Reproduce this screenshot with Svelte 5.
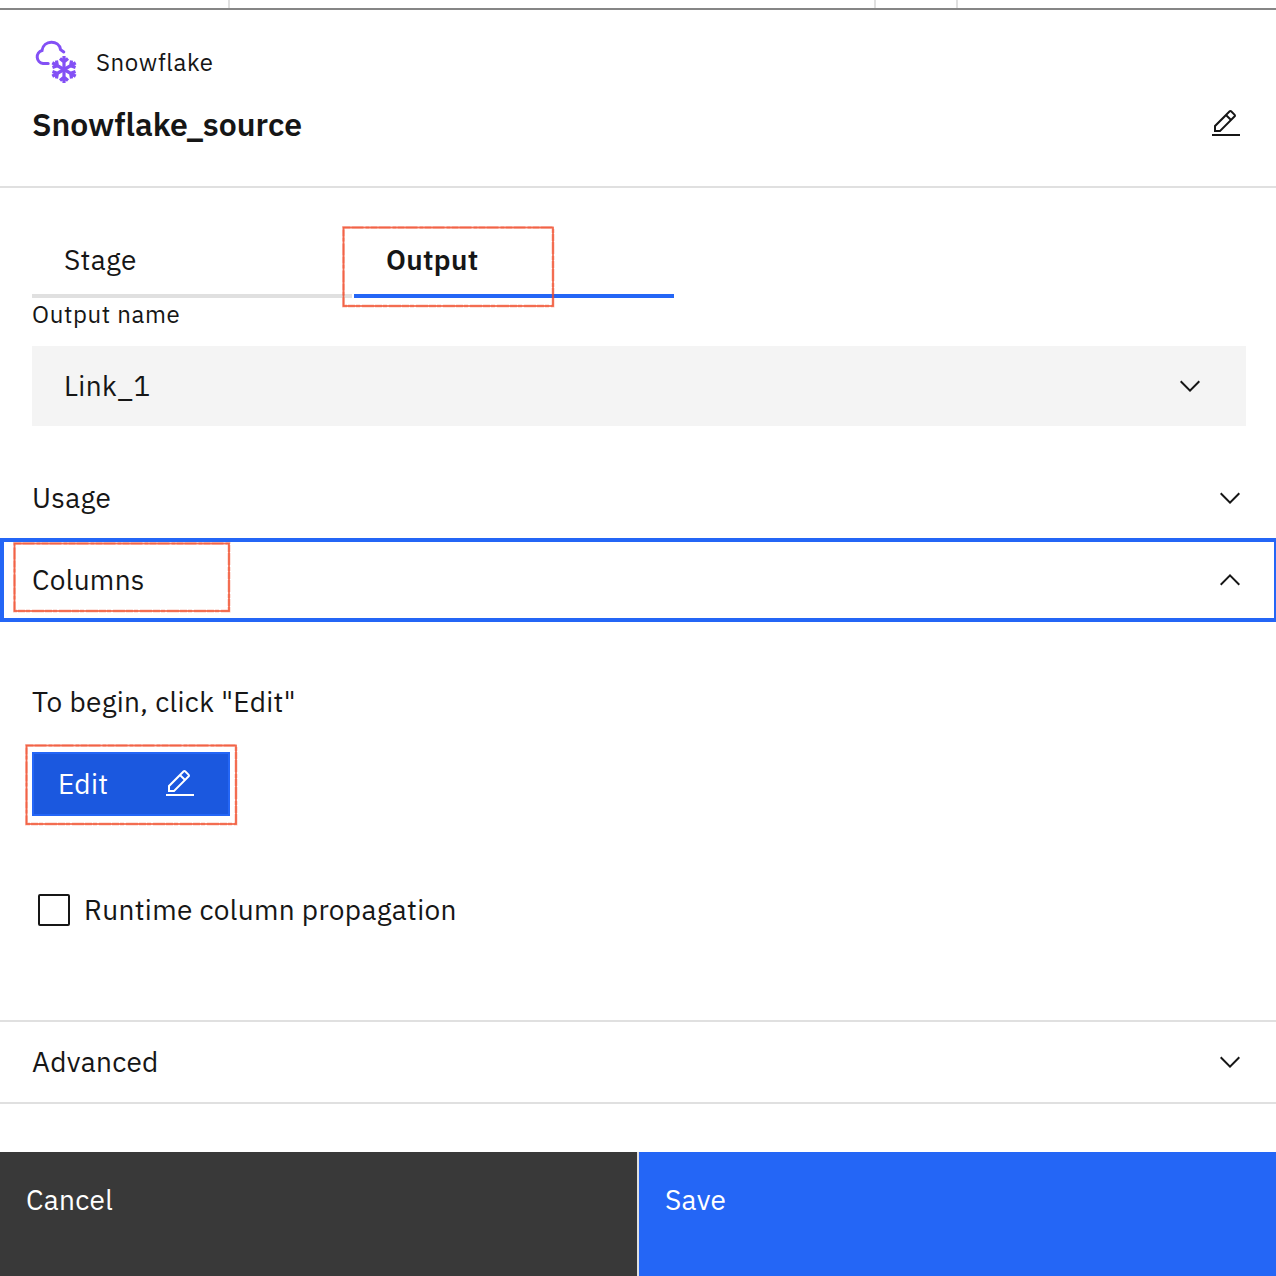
<script>
  const sections = {
    usage: 'Usage',
    columns: 'Columns',
    advanced: 'Advanced'
  };
  let propagate = $state(false);
  const arms = [0, 60, 120, 180, 240, 300];
</script>

{#snippet pencil()}
  <svg class="pencil" viewBox="0 0 32 32" aria-hidden="true">
    <path d="M2 26h28v2H2zM25.4 9c.8-.8.8-2 0-2.8l-3.6-3.6c-.8-.8-2-.8-2.8 0l-15 15V24h6.4zm-5-5L24 7.6l-3 3L17.4 7zM6 22v-3.6l10-10 3.6 3.6-10 10z" fill-rule="evenodd" />
  </svg>
{/snippet}

{#snippet chevron(up)}
  <svg class="chevron" class:up viewBox="0 0 16 16" aria-hidden="true">
    <path d="M8 11 3 6l.7-.7L8 9.6l4.3-4.3.7.7z" />
  </svg>
{/snippet}

{#snippet marker(w, h)}
  <svg class="marker" viewBox="0 0 {w} {h}" width={w} height={h} aria-hidden="true">
    <rect class="halo" x="1.5" y="1.5" width={w - 3.5} height={h - 3.5} />
    <rect class="core" x="1.5" y="1.5" width={w - 3.5} height={h - 3.5} />
  </svg>
{/snippet}

<div class="page">
  <div class="canvas-strip"><i></i><i></i><i></i><i></i></div>

  <header>
    <div class="connector">
      <svg class="logo" viewBox="0 0 48 48" aria-hidden="true">
        <path class="cloud" d="M16.2 25.4H11A6.600 6.600 0 0 1 10 12.500C11.500 1.800 27 1.600 28.600 11.700L31.800 13.900" />
        <g transform="translate(32 31.5)">
          {#each arms as angle}
            <path class="arm" transform="rotate({angle})" d="M0 0V-13.500M-4 -11 0 -7.600 4 -11" />
          {/each}
        </g>
      </svg>
      <span>Snowflake</span>
    </div>
    <div class="title-row">
      <h1>Snowflake_source</h1>
      {@render pencil()}
    </div>
  </header>

  <nav>
    <button class="tab"><span>Stage</span></button>
    <button class="tab active">
      <span>Output</span>
      <span class="mark mark-output">{@render marker(213, 82)}</span>
    </button>
  </nav>

  <div class="label"><span>Output name</span></div>
  <button class="select"><span>Link_1</span>{@render chevron(false)}</button>

  <button class="section usage"><span>{sections.usage}</span>{@render chevron(false)}</button>
  <button class="section columns">
    <span>{sections.columns}</span>{@render chevron(true)}
    <span class="mark mark-columns">{@render marker(218, 71)}</span>
  </button>

  <div class="panel">
    <p>To begin, click "Edit"</p>
    <button class="edit">
      <span>Edit</span>{@render pencil()}
      <span class="mark mark-edit">{@render marker(213, 82)}</span>
    </button>
    <label>
      <input type="checkbox" bind:checked={propagate} />
      <span>Runtime column propagation</span>
    </label>
  </div>

  <button class="section advanced"><span>{sections.advanced}</span>{@render chevron(false)}</button>

  <footer>
    <button class="cancel"><span>Cancel</span></button>
    <button class="save"><span>Save</span></button>
  </footer>
</div>

<style>
  :global(body) { margin: 0; background: #fff; }
  .page {
    box-sizing: border-box;
    width: 1276px;
    height: 1276px;
    display: flex;
    flex-direction: column;
    overflow: hidden;
    color: #161616;
    font: 400 28px/36px "IBM Plex Sans", "Open Sans", sans-serif;
    letter-spacing: 0.32px;
  }
  .page * { box-sizing: border-box; }
  button {
    display: flex;
    align-items: center;
    margin: 0;
    padding: 0;
    border: 0;
    border-radius: 0;
    background: none;
    color: inherit;
    font: inherit;
    letter-spacing: inherit;
    text-align: left;
    position: relative;
  }
  span { white-space: nowrap; }
  svg { display: block; flex: none; fill: currentColor; }
  .pencil, .chevron { width: 32px; height: 32px; }
  .up { transform: rotate(180deg); }

  .canvas-strip {
    display: grid;
    grid-template-columns: 230px 646px 82px 1fr;
    height: 10px;
    border-bottom: 2px solid #868686;
  }
  .canvas-strip i { border-right: 2px solid #e0e0e0; }
  .canvas-strip i:last-child { border: 0; }

  header { height: 178px; padding: 28px 34px 0 32px; border-bottom: 2px solid #e0e0e0; }
  .connector { display: flex; align-items: center; gap: 16px; height: 48px; font-size: 24px; letter-spacing: 0.64px; }
  .logo { width: 48px; height: 48px; fill: none; stroke: #8350f5; }
  .cloud { stroke-width: 3; stroke-linecap: round; }
  .arm { stroke-width: 3.2; }
  .title-row { display: flex; justify-content: space-between; align-items: center; height: 76px; }
  h1 { margin: 0; font-size: 32px; line-height: 40px; font-weight: 600; letter-spacing: 0; }

  nav { display: flex; gap: 2px; height: 80px; margin: 30px 0 0 32px; }
  .tab { width: 320px; height: 80px; padding: 8px 0 0 32px; border-bottom: 4px solid #e0e0e0; }
  .tab.active { border-color: #2466f6; font-weight: 600; }

  .label { height: 48px; padding-left: 32px; font-size: 24px; line-height: 32px; letter-spacing: 0.64px; }
  .select { justify-content: space-between; width: 1214px; height: 80px; margin-left: 32px; padding: 0 40px 0 32px; background: #f4f4f4; }

  .section { justify-content: space-between; width: 100%; padding: 0 30px 0 32px; }
  .usage { height: 80px; margin-top: 32px; }
  .columns { height: 84px; }
  .columns::after { content: ""; position: absolute; inset: 0; border: 4px solid #2466f6; border-right-width: 2px; }
  .panel { height: 398px; padding: 62px 0 0 32px; }
  p { margin: 0 0 32px; }
  .edit { justify-content: space-between; width: 198px; height: 64px; padding: 0 32px 0 24px; border: 2px solid #2466f6; background: #1b58df; color: #fff; }
  label { display: flex; align-items: center; gap: 14px; height: 40px; margin: 74px 0 0 6px; }
  input { appearance: none; width: 32px; height: 32px; margin: 0; border: 2px solid #161616; border-radius: 2px; }
  .advanced { height: 84px; border-block: 2px solid #e0e0e0; }

  footer { display: grid; grid-template-columns: 637px 1fr; gap: 2px; height: 124px; margin-top: 48px; background: #e0e0e0; color: #fff; }
  footer button { align-items: flex-start; padding: 30px 26px; }
  .cancel { background: #393939; }
  .save { background: #2466f6; }

  .mark { position: absolute; z-index: 1; }
  .mark-output { left: -12px; top: 8px; }
  .mark-columns { left: 13px; top: 4px; }
  .mark-edit { left: -9px; top: -10px; }
  .marker { fill: none; stroke: #f04a28; overflow: visible; }
  .halo { stroke-width: 3; opacity: 0.3; stroke-dasharray: 7 1 12 2 4 1; }
  .core { stroke-width: 1.8; opacity: 0.8; }
</style>
